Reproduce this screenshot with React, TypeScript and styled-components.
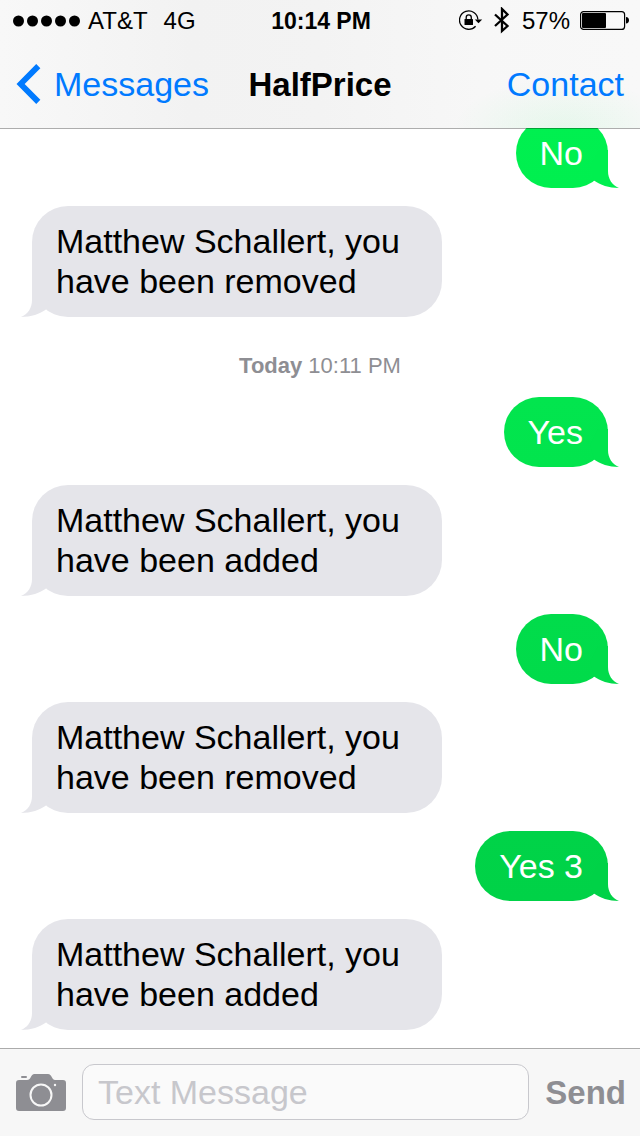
import React from 'react';
import styled, { createGlobalStyle } from 'styled-components';

const GlobalStyle = createGlobalStyle`
  *, *::before, *::after { box-sizing: border-box; }
  body {
    margin: 0;
    background: #fff;
    color: #000;
    font-family: "Liberation Sans", Arial, Helvetica, sans-serif;
  }
`;

const Screen = styled.div`
  display: flex;
  flex-direction: column;
  height: 100vh;
  overflow: hidden;
`;

const Header = styled.header`
  position: relative;
  z-index: 1;
  flex: none;
  background:
    radial-gradient(ellipse 110px 50px at 88% 100%, rgba(0, 240, 80, 0.07), rgba(0, 240, 80, 0)),
    linear-gradient(to right, #f8f8f8 0%, #f2f2f2 30%, #f3f3f3 50%, #f7f7f7 75%, #f8f8f8 100%);
  box-shadow: 0 1px 0 rgba(0, 0, 0, 0.32);
`;

const ThreeColumns = styled.div`
  display: grid;
  grid-template-columns: 1fr auto 1fr;
  align-items: center;
`;

const StatusBar = styled(ThreeColumns)`
  height: 40px;
  padding: 2px 11px 0 13px;
  font-size: 24px;
  line-height: 28px;
`;

const StatusGroup = styled.div<{ $end?: boolean }>`
  display: flex;
  align-items: center;
  justify-content: ${(p) => (p.$end ? 'flex-end' : 'flex-start')};
`;

const Carrier = styled.span`
  margin: 0 16px 0 8px;
`;

const Clock = styled.time`
  font-size: 23px;
  font-weight: 700;
`;

const Battery = styled.span`
  margin-left: 10px;
`;

const Icon = styled.svg`
  display: block;
  flex: none;
`;

const NavBar = styled(ThreeColumns)`
  height: 88px;
  padding: 0 16px;
  font-size: 34px;
  line-height: 40px;
`;

const NavLink = styled.a<{ $end?: boolean }>`
  display: flex;
  align-items: center;
  gap: 12px;
  justify-self: ${(p) => (p.$end ? 'end' : 'start')};
  color: #007aff;
  text-decoration: none;
`;

const Title = styled.h1`
  margin: 0;
  padding-top: 2px;
  font-size: 33px;
  font-weight: 700;
`;

const Thread = styled.main`
  display: flex;
  flex: 1;
  flex-direction: column;
  justify-content: flex-end;
  gap: 18px;
  min-height: 0;
  overflow: hidden;
  padding: 0 32px 18px;
`;

const Bubble = styled.div`
  position: relative;
  flex: none;
  max-width: 410px;
  border-radius: 36px;
  font-size: 34px;
  line-height: 40px;
`;

const Received = styled(Bubble)`
  align-self: flex-start;
  padding: 15px 24px 16px;
  background: #e5e5ea;
  color: #e5e5ea;
`;

const Sent = styled(Bubble)<{ $from: string; $to: string }>`
  align-self: flex-end;
  padding: 15px 25px 15px 24px;
  background: linear-gradient(${(p) => p.$from}, ${(p) => p.$to});
  color: ${(p) => p.$to};
`;

const BubbleText = styled.span<{ $color: string }>`
  position: relative;
  color: ${(p) => p.$color};
`;

const TailShape = styled.svg<{ $flip?: boolean }>`
  position: absolute;
  bottom: 0;
  ${(p) => (p.$flip ? 'left: -12px; transform: scaleX(-1);' : 'right: -12px;')}
`;

const Timestamp = styled.p`
  flex: none;
  margin: 0;
  padding-top: 18px;
  color: #8e8e93;
  font-size: 22px;
  line-height: 26px;
  text-align: center;
`;

const Composer = styled.form`
  display: flex;
  flex: none;
  align-items: center;
  gap: 16px;
  height: 88px;
  padding: 0 14px 0 16px;
  background: #f7f7f7;
  box-shadow: inset 0 1px 0 #ababab;
`;

const PlainButton = styled.button`
  flex: none;
  padding: 2px 0 0;
  border: 0;
  background: none;
  color: #8e8e93;
  font: 700 33px/40px "Liberation Sans", Arial, sans-serif;
`;

const MessageInput = styled.input`
  flex: 1;
  min-width: 0;
  height: 56px;
  padding: 0 15px;
  border: 1px solid #c8c8cd;
  border-radius: 12px;
  background: #fafafa;
  color: #000;
  font: 34px "Liberation Sans", Arial, sans-serif;
  &::placeholder { color: #c7c7cc; opacity: 1; }
`;

function Tail({ flip }: { flip?: boolean }) {
  return (
    <TailShape $flip={flip} width="30" height="40" viewBox="0 0 30 40" aria-hidden="true">
      <path d="M18 2V23C18 31 22 37 29 40C19 40 10 37 4 32.500L0 18L8 2Z" fill="currentColor" />
    </TailShape>
  );
}

type Item =
  | { kind: 'sent'; text: string; from: string; to: string }
  | { kind: 'received'; text: string }
  | { kind: 'time'; day: string; time: string };

const items: Item[] = [
  { kind: 'sent', text: 'No', from: '#00f050', to: '#00ef4f' },
  { kind: 'received', text: 'Matthew Schallert, you have been removed' },
  { kind: 'time', day: 'Today', time: '10:11 PM' },
  { kind: 'sent', text: 'Yes', from: '#02e54e', to: '#02e44d' },
  { kind: 'received', text: 'Matthew Schallert, you have been added' },
  { kind: 'sent', text: 'No', from: '#01dc4b', to: '#01db4a' },
  { kind: 'received', text: 'Matthew Schallert, you have been removed' },
  { kind: 'sent', text: 'Yes 3', from: '#00d348', to: '#00d247' },
  { kind: 'received', text: 'Matthew Schallert, you have been added' },
];

function ThreadItem({ item }: { item: Item }) {
  if (item.kind === 'time') {
    return (
      <Timestamp>
        <b>{item.day}</b> {item.time}
      </Timestamp>
    );
  }
  if (item.kind === 'sent') {
    return (
      <Sent $from={item.from} $to={item.to}>
        <Tail />
        <BubbleText $color="#fff">{item.text}</BubbleText>
      </Sent>
    );
  }
  return (
    <Received>
      <Tail flip />
      <BubbleText $color="#000">{item.text}</BubbleText>
    </Received>
  );
}

export default function App() {
  return (
    <Screen>
      <GlobalStyle />
      <Header>
        <StatusBar>
          <StatusGroup>
            <Icon width="67" height="12" viewBox="0 0 67 12" role="img" aria-label="Signal strength">
              {[0, 1, 2, 3, 4].map((i) => (
                <circle key={i} cx={5.5 + i * 14} cy="6" r="5.5" />
              ))}
            </Icon>
            <Carrier>AT&amp;T</Carrier>
            <span>4G</span>
          </StatusGroup>
          <Clock>10:14 PM</Clock>
          <StatusGroup $end>
            <Icon width="25" height="22" viewBox="0 0 25 22" role="img" aria-label="Rotation locked">
              <path d="M18.900 9.500A9.200 9.200 0 1 0 16.600 16.200" fill="none" stroke="#000" strokeWidth="1.300" />
              <path d="M15.800 9.500H23.200L19.500 13.200Z" />
              <rect x="5.500" y="9" width="8.500" height="6" rx="0.600" />
              <path d="M7.200 9.500V7.500A2.550 2.550 0 0 1 12.300 7.500V9.500" fill="none" stroke="#000" strokeWidth="1.300" />
            </Icon>
            <Icon width="38" height="28" viewBox="0 0 38 28" role="img" aria-label="Bluetooth">
              <path d="M11 7.500L23.500 19L18 24V2L23.500 7.500L11 19" fill="none" stroke="#000" strokeWidth="2.300" />
            </Icon>
            <span>57%</span>
            <Battery>
              <Icon width="49" height="20" viewBox="0 0 49 20" role="img" aria-label="Battery">
                <rect x="0.600" y="0.600" width="44" height="17.800" rx="3" fill="none" stroke="#000" strokeWidth="1.200" />
                <rect x="2" y="2" width="24" height="15" rx="1" />
                <path d="M46 6C48 6.200 49 7.500 49 9.300S48 12.400 46 12.600Z" />
              </Icon>
            </Battery>
          </StatusGroup>
        </StatusBar>
        <NavBar as="nav">
          <NavLink href="#messages">
            <Icon width="26" height="40" viewBox="0 0 26 40" aria-hidden="true">
              <path d="M22.300 2.100L4.600 20L22.300 37.900" fill="none" stroke="#007aff" strokeWidth="5.800" />
            </Icon>
            Messages
          </NavLink>
          <Title>HalfPrice</Title>
          <NavLink $end href="#contact">
            Contact
          </NavLink>
        </NavBar>
      </Header>
      <Thread>
        {items.map((item, i) => (
          <ThreadItem key={i} item={item} />
        ))}
      </Thread>
      <Composer onSubmit={(e) => e.preventDefault()}>
        <PlainButton type="button" aria-label="Attach photo">
          <Icon width="50" height="38" viewBox="0 0 50 38">
            <path
              d="M3 6H11C13 6 13.800 5 14.600 3.500C15.800 1.200 16.500 0 18.500 0H32C34 0 34.800 1.200 36 3.500C36.800 5 37.500 6 39 6H47A3 3 0 0 1 50 9V34A3 3 0 0 1 47 37H3A3 3 0 0 1 0 34V9A3 3 0 0 1 3 6Z"
              fill="#8e8e93"
            />
            <rect x="5" y="2" width="6" height="2" rx="1" fill="#8e8e93" />
            <circle cx="25" cy="21" r="10.500" fill="none" stroke="#f7f7f7" strokeWidth="2" />
            <circle cx="39" cy="11" r="1.200" fill="#f7f7f7" />
          </Icon>
        </PlainButton>
        <MessageInput type="text" aria-label="Text Message" placeholder="Text Message" />
        <PlainButton type="submit">Send</PlainButton>
      </Composer>
    </Screen>
  );
}
